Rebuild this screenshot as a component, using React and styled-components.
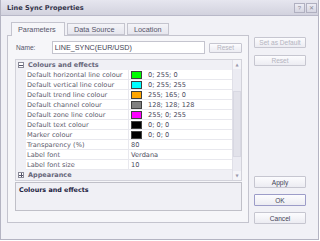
import React from "react";
import styled, { createGlobalStyle } from "styled-components";

const Global = createGlobalStyle`
  html, body { margin: 0; padding: 0; background: #ffffff; }
  * { box-sizing: border-box; }
`;

const ui = `"Liberation Sans", Arial, sans-serif`;
const grid = `"DejaVu Sans", Verdana, sans-serif`;

const Window = styled.div`
  width: 319px;
  height: 240px;
  background: #f1f1f6;
  border: 1px solid #b4b4c2;
  border-top: none;
  display: flex;
  flex-direction: column;
  font-family: ${ui};
`;

const TitleBar = styled.div`
  height: 16px;
  flex: none;
  display: flex;
  align-items: center;
  padding: 0 1px 0 6px;
  background: linear-gradient(#e6e6ef, #d2d2de);
  border-bottom: 1px solid #b8b8c8;
`;

const Title = styled.div`
  flex: 1;
  font-family: ${grid};
  font-weight: bold;
  font-size: 6.6px;
  color: #34344a;
`;

const CapButton = styled.div`
  width: 11px;
  height: 10px;
  margin-left: 1px;
  border: 1px solid #b0b0c0;
  background: linear-gradient(#ececf4, #d6d6e2);
  font-size: 6px;
  color: #8a8a98;
  display: flex;
  align-items: center;
  justify-content: center;
  line-height: 1;
`;

const Body = styled.div`
  flex: 1;
  display: flex;
  padding: 6px 0 0 6px;
`;

const LeftCol = styled.div`
  width: 242px;
  display: flex;
  flex-direction: column;
`;

const Tabs = styled.div`
  display: flex;
  height: 13px;
  padding-left: 4px;
  gap: 2px;
  align-items: flex-end;
`;

const Tab = styled.div`
  height: ${(p) => (p.$active ? "14px" : "12px")};
  margin-bottom: ${(p) => (p.$active ? "-1px" : "0")};
  width: ${(p) => p.$w}px;
  border: 1px solid #c4c4ce;
  border-bottom: ${(p) => (p.$active ? "none" : "1px solid #c4c4ce")};
  background: ${(p) => (p.$active ? "#f6f6f9" : "linear-gradient(#f4f4f8, #e6e6ee)")};
  font-size: 7.3px;
  color: #55556a;
  padding-left: 6px;
  display: flex;
  align-items: center;
  position: relative;
  z-index: ${(p) => (p.$active ? 1 : 0)};
`;

const Panel = styled.div`
  height: 188px;
  background: #f6f6f9;
  border: 1px solid #c4c4ce;
  padding: 5px 6px 11px 7px;
  display: flex;
  flex-direction: column;
`;

const NameRow = styled.div`
  display: flex;
  align-items: center;
  height: 13px;
  padding-left: 1px;
`;

const Label = styled.div`
  width: 36px;
  font-size: 6.6px;
  color: #55556a;
`;

const Input = styled.div`
  width: 154px;
  height: 13px;
  background: #ffffff;
  border: 1px solid #c4c4ce;
  font-size: 7.2px;
  color: #444456;
  padding-left: 2px;
  display: flex;
  align-items: center;
`;

const Button = styled.div`
  width: ${(p) => p.$w || 52}px;
  height: ${(p) => p.$h || 12}px;
  margin-left: ${(p) => p.$ml || 0}px;
  border: 1px solid ${(p) => (p.$default ? "#9c9cc8" : "#c6c6d0")};
  background: linear-gradient(#fcfcfe, #ececf2);
  border-radius: 1px;
  font-size: 6.6px;
  color: ${(p) => (p.$disabled ? "#b4b4c0" : "#444456")};
  display: flex;
  align-items: center;
  justify-content: center;
  flex: none;
`;

const Grid = styled.div`
  margin-top: 5px;
  height: 122px;
  border: 1px solid #d2d2da;
  background: #f0f0f5;
  display: flex;
  font-family: ${grid};
`;

const Rows = styled.div`
  flex: 1;
  display: flex;
  flex-direction: column;
`;

const Header = styled.div`
  height: 10px;
  display: flex;
  align-items: center;
  font-size: 6.5px;
  font-weight: bold;
  color: #66667a;
`;

const Toggle = styled.div`
  width: 6px;
  height: 6px;
  margin: 0 4px 0 2px;
  border: 1px solid #8a8a98;
  background: #ffffff;
  position: relative;
  &::before {
    content: "";
    position: absolute;
    left: 0;
    right: 0;
    top: 1.5px;
    height: 1px;
    background: #55556a;
  }
  &::after {
    content: "";
    position: absolute;
    top: 0;
    bottom: 0;
    left: 1.5px;
    width: 1px;
    background: #55556a;
    display: ${(p) => (p.$plus ? "block" : "none")};
  }
`;

const Row = styled.div`
  height: 10px;
  display: flex;
  padding-left: 10px;
`;

const NameCell = styled.div`
  width: 103px;
  background: #ffffff;
  border-bottom: 1px solid #e8e8ee;
  border-right: 1px solid #e8e8ee;
  font-size: 6.6px;
  color: #5a5a6c;
  padding-left: 1px;
  display: flex;
  align-items: center;
  white-space: nowrap;
  overflow: hidden;
`;

const ValueCell = styled.div`
  flex: 1;
  background: #ffffff;
  border-bottom: 1px solid #e8e8ee;
  font-size: 6.6px;
  color: #4a4a5c;
  display: flex;
  align-items: center;
  padding-left: 2px;
  white-space: nowrap;
`;

const Swatch = styled.div`
  width: 11px;
  height: 8px;
  border: 1px solid #404040;
  background: ${(p) => p.$c};
  margin-right: 6px;
  flex: none;
`;

const Scroll = styled.div`
  width: 9px;
  background: #ebebf2;
  border-left: 1px solid #e0e0e8;
  display: flex;
  flex-direction: column;
  align-items: stretch;
`;

const Arrow = styled.div`
  height: 9px;
  display: flex;
  align-items: center;
  justify-content: center;
  font-size: 4px;
  color: #9a9aac;
  background: #f4f4f8;
`;

const Track = styled.div`
  flex: 1;
  padding-top: 22px;
  padding-bottom: 14px;
  display: flex;
`;

const Thumb = styled.div`
  flex: 1;
  border: 1px solid #d8d8e2;
  background: #e2e2ea;
`;

const Desc = styled.div`
  margin-top: 1px;
  height: 31px;
  border: 1px solid #c0c0c8;
  background: #f0f0f5;
  padding: 3px 3px;
  font-family: ${grid};
  font-weight: bold;
  font-size: 6.4px;
  color: #22223e;
`;

const RightCol = styled.div`
  width: 52px;
  margin-left: 5px;
  display: flex;
  flex-direction: column;
  padding-top: 15px;
  padding-bottom: 15px;
`;

const Stack = styled.div`
  display: flex;
  flex-direction: column;
  gap: ${(p) => p.$gap}px;
  margin-top: ${(p) => (p.$bottom ? "auto" : "0")};
`;

const rows = [
  ["Default horizontal line colour", "#00ff00", "0; 255; 0"],
  ["Default vertical line colour", "#00ffff", "0; 255; 255"],
  ["Default trend line colour", "#ffa500", "255; 165; 0"],
  ["Default channel colour", "#808080", "128; 128; 128"],
  ["Default zone line colour", "#ff00ff", "255; 0; 255"],
  ["Default text colour", "#000000", "0; 0; 0"],
  ["Marker colour", "#000000", "0; 0; 0"],
  ["Transparency (%)", null, "80"],
  ["Label font", null, "Verdana"],
  ["Label font size", null, "10"],
];

export default function App() {
  return (
    <>
      <Global />
      <Window>
        <TitleBar>
          <Title>Line Sync Properties</Title>
          <CapButton>?</CapButton>
          <CapButton>✕</CapButton>
        </TitleBar>
        <Body>
          <LeftCol>
            <Tabs>
              <Tab $active $w={54}>Parameters</Tab>
              <Tab $w={58}>Data Source</Tab>
              <Tab $w={42}>Location</Tab>
            </Tabs>
            <Panel>
              <NameRow>
                <Label>Name:</Label>
                <Input>LINE_SYNC(EUR/USD)</Input>
                <Button $w={33} $h={10} $ml={4} $disabled>Reset</Button>
              </NameRow>
              <Grid>
                <Rows>
                  <Header>
                    <Toggle />
                    Colours and effects
                  </Header>
                  {rows.map(([n, c, v]) => (
                    <Row key={n}>
                      <NameCell>{n}</NameCell>
                      <ValueCell>
                        {c && <Swatch $c={c} />}
                        {v}
                      </ValueCell>
                    </Row>
                  ))}
                  <Header>
                    <Toggle $plus />
                    Appearance
                  </Header>
                </Rows>
                <Scroll>
                  <Arrow>▲</Arrow>
                  <Track>
                    <Thumb />
                  </Track>
                  <Arrow>▼</Arrow>
                </Scroll>
              </Grid>
              <Desc>Colours and effects</Desc>
            </Panel>
          </LeftCol>
          <RightCol>
            <Stack $gap={7}>
              <Button $h={11} $disabled>Set as Default</Button>
              <Button $h={11} $disabled>Reset</Button>
            </Stack>
            <Stack $bottom $gap={6}>
              <Button>Apply</Button>
              <Button $default>OK</Button>
              <Button>Cancel</Button>
            </Stack>
          </RightCol>
        </Body>
      </Window>
    </>
  );
}
